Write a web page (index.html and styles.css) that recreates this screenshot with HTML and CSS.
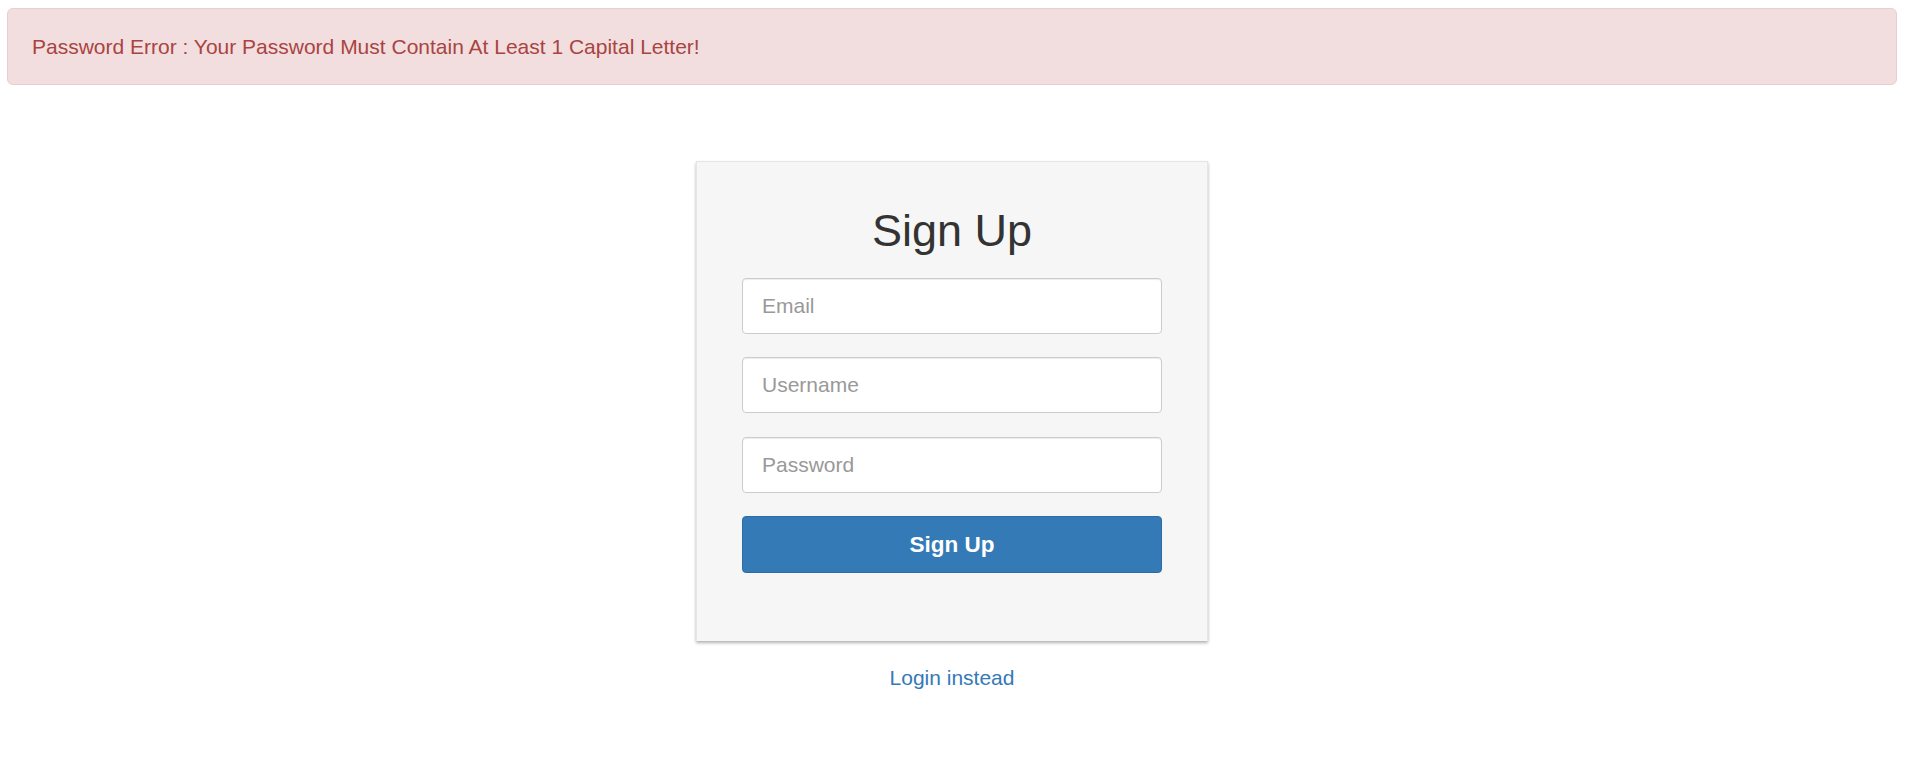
FILE: index.html
```html
<!DOCTYPE html>
<html lang="en">
<head>
<meta charset="utf-8">
<title>Sign Up</title>
<link rel="stylesheet" href="styles.css">
</head>
<body>
<div class="page">
  <div class="alert">Password Error : Your Password Must Contain At Least 1 Capital Letter!</div>
  <div class="card">
    <h2 class="card-title">Sign Up</h2>
    <form class="form">
      <input class="field" type="email" placeholder="Email">
      <input class="field" type="text" placeholder="Username">
      <input class="field" type="password" placeholder="Password">
      <button class="btn" type="button">Sign Up</button>
    </form>
  </div>
  <div class="alt"><a class="alt-link" href="#">Login instead</a></div>
</div>
</body>
</html>
```
FILE: styles.css
```css
* { box-sizing: border-box; }
html, body { margin: 0; padding: 0; background: #fff; }
body {
  font-family: "Liberation Sans", Arial, Helvetica, sans-serif;
  font-size: 21px;
  line-height: 30px;
  color: #333;
}
.page {
  margin: 0 12px 0 7px;
  padding-top: 8px;
}
.alert {
  height: 77px;
  padding: 22.5px 24px;
  background: #f2dede;
  border: 1px solid #ebccd1;
  border-radius: 6px;
  color: #a94442;
}
.card {
  width: 512px;
  margin: 76px auto 0;
  padding: 44px 45px 68px;
  background: #f6f6f6;
  border: 1px solid #e6e6e6;
  border-bottom: none;
  box-shadow: 0 2px 3px rgba(0, 0, 0, 0.3);
}
.card-title {
  margin: 0 0 22px;
  font-size: 45px;
  line-height: 49.5px;
  font-weight: 400;
  text-align: center;
  color: #333;
}
.form {
  display: flex;
  flex-direction: column;
  gap: 23.5px;
}
.field {
  display: block;
  width: 100%;
  height: 56px;
  padding: 0 19px;
  font-family: inherit;
  font-size: 21px;
  color: #555;
  background: #fff;
  border: 1px solid #ccc;
  border-radius: 4px;
  box-shadow: inset 0 1px 1px rgba(0, 0, 0, 0.075);
  outline: none;
}
.field::placeholder { color: #999; }
.btn {
  display: block;
  width: 100%;
  height: 57px;
  font-family: inherit;
  font-size: 22.5px;
  font-weight: 700;
  color: #fff;
  background: #337ab7;
  border: 1px solid #2e6da4;
  border-radius: 4px;
  cursor: pointer;
}
.alt {
  margin-top: 22px;
  text-align: center;
}
.alt-link {
  color: #337ab7;
  text-decoration: none;
}
```
